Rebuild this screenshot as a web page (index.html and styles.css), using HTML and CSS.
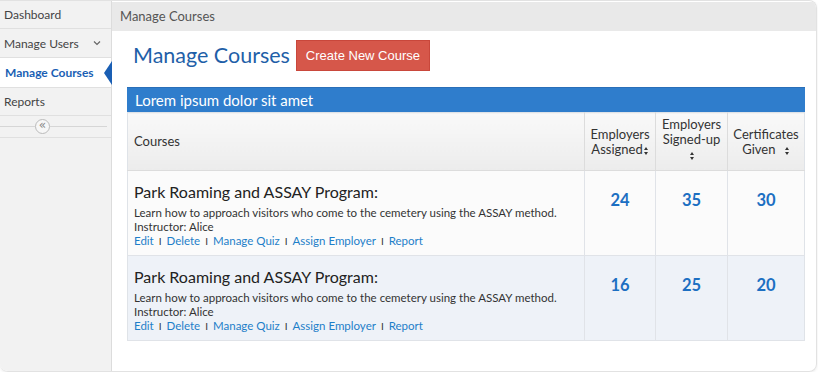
FILE: index.html
```html
<!DOCTYPE html>
<html>
<head>
<meta charset="utf-8">
<link rel="stylesheet" href="styles.css">
</head>
<body>
<div class="frame">
  <aside class="sidebar">
    <div class="nav-item">Dashboard</div>
    <div class="nav-item">Manage Users <svg class="chev" width="8" height="6" viewBox="0 0 8 6"><path d="M1 1.5 L4 4.5 L7 1.5" fill="none" stroke="#666" stroke-width="1.2"/></svg></div>
    <div class="nav-item active">Manage Courses<span class="pointer"></span></div>
    <div class="nav-item">Reports</div>
    <div class="collapse-row"><span class="line"></span><span class="circle">«</span><span class="line short"></span></div>
  </aside>
  <main class="main">
    <div class="topbar">Manage Courses</div>
    <div class="content">
      <div class="title-row">
        <h1 class="title">Manage Courses</h1>
        <button class="btn">Create New Course</button>
      </div>
      <div class="panel-head">Lorem ipsum dolor sit amet</div>
      <table class="grid">
        <thead>
          <tr>
            <th class="c-course">Courses</th>
            <th class="c-num">Employers Assigned<span class="sort"></span></th>
            <th class="c-num">Employers Signed-up<br><span class="sort"></span></th>
            <th class="c-num">Certificates Given <span class="sort sp"></span></th>
          </tr>
        </thead>
        <tbody>
          <tr class="r1">
            <td class="c-course">
              <div class="ct">Park Roaming and ASSAY Program:</div>
              <div class="cd">Learn how to approach visitors who come to the cemetery using the ASSAY method.</div>
              <div class="cd">Instructor: Alice</div>
              <div class="links"><a>Edit</a><i>I</i><a>Delete</a><i>I</i><a>Manage Quiz</a><i>I</i><a>Assign Employer</a><i>I</i><a>Report</a></div>
            </td>
            <td class="n">24</td><td class="n">35</td><td class="n">30</td>
          </tr>
          <tr class="r2">
            <td class="c-course">
              <div class="ct">Park Roaming and ASSAY Program:</div>
              <div class="cd">Learn how to approach visitors who come to the cemetery using the ASSAY method.</div>
              <div class="cd">Instructor: Alice</div>
              <div class="links"><a>Edit</a><i>I</i><a>Delete</a><i>I</i><a>Manage Quiz</a><i>I</i><a>Assign Employer</a><i>I</i><a>Report</a></div>
            </td>
            <td class="n">16</td><td class="n">25</td><td class="n">20</td>
          </tr>
        </tbody>
      </table>
    </div>
  </main>
</div>
</body>
</html>
```
FILE: styles.css
```css
* { box-sizing: border-box; }
html, body { margin: 0; padding: 0; background: #fff; }
body { font-family: Lato, "Open Sans", sans-serif; color: #333; }
.frame {
  width: 817px; height: 372px;
  display: flex;
  border-radius: 0 8px 8px 8px;
  border: 1px solid #e2e2e2;
  border-left: none;
  overflow: hidden;
  box-shadow: 0 1px 3px rgba(0,0,0,0.08);
}
.sidebar {
  width: 112px; flex: none;
  background: #f2f2f2;
  border-right: 1px solid #dcdcdc;
}
.nav-item {
  height: 28px;
  display: flex; align-items: center; justify-content: space-between;
  padding: 0 10px 0 4px;
  font-size: 12px; color: #444;
  border-bottom: 1px solid #e0e0e0;
  position: relative;
}
.nav-item:nth-child(2) { height: 29px; }
.nav-item.active {
  background: #fff; color: #1a5fb4; font-weight: bold; font-size: 12px;
  height: 30px; padding-left: 5px;
}
.pointer {
  position: absolute; right: -1px; top: 3px;
  width: 0; height: 0;
  border-top: 12px solid transparent;
  border-bottom: 12px solid transparent;
  border-right: 8px solid #1a5fb4;
}
.collapse-row {
  height: 22px; display: flex; align-items: center;
  border-bottom: 1px solid #e0e0e0;
}
.collapse-row .line { height: 1px; background: #d6d6d6; width: 35px; }
.collapse-row .line.short { width: 57px; }
.circle {
  width: 15px; height: 15px; border-radius: 50%;
  border: 1px solid #bbb; background: #f7f7f7;
  font-size: 12px; line-height: 11px; text-align: center; color: #888;
  font-family: "DejaVu Sans", sans-serif;
}
.main { flex: 1; display: flex; flex-direction: column; }
.topbar {
  height: 29px; margin-top: 1px;
  background: #e9e9e9;
  padding-left: 8px; padding-bottom: 2px;
  display: flex; align-items: center;
  font-size: 13px; color: #555;
}
.content { padding: 8px 12px 0 15px; }
.title-row { display: flex; align-items: center; height: 32px; }
.title {
  margin: 0; font-weight: normal; font-size: 21.5px; color: #1f5fa8;
  margin-left: 6px; margin-right: 6px;
}
.btn {
  background: #d6574a; color: #fff; border: 1px solid #c9473b;
  font-family: "Liberation Sans", Arial, sans-serif; font-size: 13px;
  width: 134px; height: 31px; padding: 0;
}
.panel-head {
  margin-top: 16px;
  background: #2f7dcc; color: #fff;
  height: 25px; padding-left: 8px;
  display: flex; align-items: center;
  font-size: 15px;
  border-top: 1px solid #2a6fb8;
}
.grid {
  width: 678px; border-collapse: collapse;
  border: 1px solid #dfe3e8;
}
.grid th {
  height: 58px;
  background: linear-gradient(#f9f9f9, #ececec);
  font-weight: normal; font-size: 13px; color: #333;
  border-left: 1px solid #dcdcdc;
  border-bottom: 1px solid #dcdcdc;
  line-height: 15px;
}
.grid th.c-course { text-align: left; padding-left: 6px; border-left: none; }
.grid th.c-num { text-align: center; padding: 0 1px; }
.grid th:nth-child(2) { width: 71px; }
.grid th:nth-child(3) { width: 72px; padding-bottom: 5px; }
.grid th:nth-child(4) { width: 77px; }
.sort {
  display: inline-block; width: 5px; height: 8px; vertical-align: -1px; margin-left: 1px;
  position: relative;
}
.sort::before, .sort::after {
  content: ""; position: absolute; left: 0; width: 0; height: 0;
  border-left: 2.5px solid transparent; border-right: 2.5px solid transparent;
}
.sort::before { top: 0; border-bottom: 3px solid #333; }
.sort::after { bottom: 0; border-top: 3px solid #333; }
.sort.sp { margin-left: 6px; }
.grid td {
  height: 85px;
  border-left: 1px solid #e0e3e8;
  border-bottom: 1px solid #e0e3e8;
  vertical-align: top;
}
.grid td.c-course { border-left: none; padding: 11px 6px 0; }
.r1 td { background: #fbfbfb; }
.r2 td { background: #eef2f8; }
.ct { font-size: 16px; color: #222; margin-bottom: 5px; }
.cd { font-size: 11.5px; line-height: 14px; color: #333; }
.links { font-size: 11.5px; line-height: 14px; color: #1e7fc9; }
.links a { color: #1e7fc9; }
.links i { font-style: normal; color: #333; margin: 0 5px; font-size: 10px; }
.grid td.n {
  text-align: center; font-weight: bold; color: #1c6fc2; font-size: 16.5px;
  padding-top: 19px;
}
```
